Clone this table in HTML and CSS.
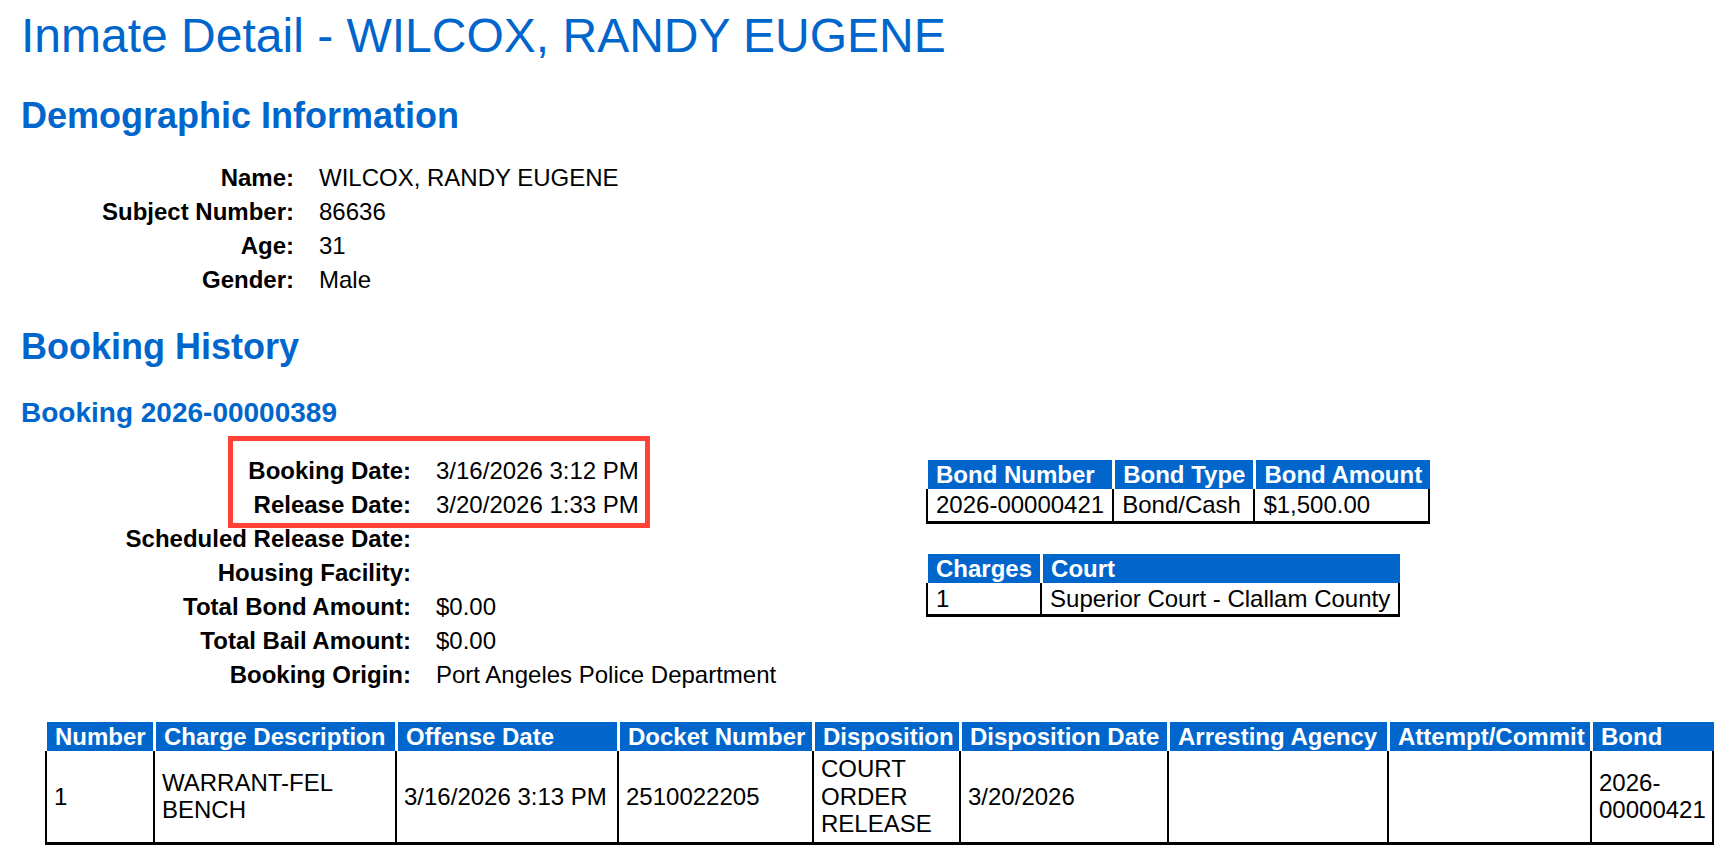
FILE: index.html
```html
<!DOCTYPE html>
<html lang="en">
<head>
<meta charset="utf-8">
<title>Inmate Detail - WILCOX, RANDY EUGENE</title>
<link rel="stylesheet" href="styles.css">
</head>
<body>
<main class="page">
  <h1 class="title">Inmate Detail - WILCOX, RANDY EUGENE</h1>

  <h2 class="section">Demographic Information</h2>
  <dl class="details demo">
    <dt>Name:</dt><dd>WILCOX, RANDY EUGENE</dd>
    <dt>Subject Number:</dt><dd>86636</dd>
    <dt>Age:</dt><dd>31</dd>
    <dt>Gender:</dt><dd>Male</dd>
  </dl>

  <h2 class="section section-booking">Booking History</h2>
  <h3 class="booking-title">Booking 2026-00000389</h3>

  <div class="booking-body">
    <div class="booking-info">
      <div class="highlight"></div>
      <dl class="details booking">
        <dt>Booking Date:</dt><dd>3/16/2026 3:12 PM</dd>
        <dt>Release Date:</dt><dd>3/20/2026 1:33 PM</dd>
        <dt>Scheduled Release Date:</dt><dd></dd>
        <dt>Housing Facility:</dt><dd></dd>
        <dt>Total Bond Amount:</dt><dd>$0.00</dd>
        <dt>Total Bail Amount:</dt><dd>$0.00</dd>
        <dt>Booking Origin:</dt><dd>Port Angeles Police Department</dd>
      </dl>
    </div>
    <div class="side-tables">
      <table class="grid side bond-table">
        <thead>
          <tr><th>Bond Number</th><th>Bond Type</th><th>Bond Amount</th></tr>
        </thead>
        <tbody>
          <tr><td>2026-00000421</td><td>Bond/Cash</td><td>$1,500.00</td></tr>
        </tbody>
      </table>
      <table class="grid side court-table">
        <thead>
          <tr><th>Charges</th><th>Court</th></tr>
        </thead>
        <tbody>
          <tr><td>1</td><td>Superior Court - Clallam County</td></tr>
        </tbody>
      </table>
    </div>
  </div>

  <table class="grid charge-table">
    <thead>
      <tr>
        <th class="c-num">Number</th>
        <th class="c-desc">Charge Description</th>
        <th class="c-off">Offense Date</th>
        <th class="c-docket">Docket Number</th>
        <th class="c-disp">Disposition</th>
        <th class="c-dispdate">Disposition Date</th>
        <th class="c-agency">Arresting Agency</th>
        <th class="c-attempt">Attempt/Commit</th>
        <th class="c-bond">Bond</th>
      </tr>
    </thead>
    <tbody>
      <tr>
        <td>1</td>
        <td>WARRANT-FEL BENCH</td>
        <td>3/16/2026 3:13 PM</td>
        <td>2510022205</td>
        <td>COURT ORDER RELEASE</td>
        <td>3/20/2026</td>
        <td></td>
        <td></td>
        <td>2026-00000421</td>
      </tr>
    </tbody>
  </table>
</main>
</body>
</html>
```

FILE: styles.css
```css
html, body {
  margin: 0;
  padding: 0;
  background: #ffffff;
}

body {
  font-family: "Liberation Sans", Arial, Helvetica, sans-serif;
  font-size: 24px;
  color: #000000;
}

.page {
  padding: 8px 22px 0 21px;
}

.title {
  margin: 0;
  font-size: 48px;
  font-weight: normal;
  line-height: 55px;
  color: #0066cc;
}

.section {
  margin: 32px 0 0;
  font-size: 36px;
  font-weight: bold;
  line-height: 41px;
  color: #0066cc;
}

.section-booking {
  margin-top: 29px;
}

.booking-title {
  margin: 30px 0 0;
  font-size: 28px;
  font-weight: bold;
  line-height: 32px;
  color: #0066cc;
}

.details {
  display: grid;
  column-gap: 25px;
  margin: 0;
  line-height: 34px;
}

.details dt {
  font-weight: bold;
  text-align: right;
  white-space: nowrap;
}

.details dd {
  margin: 0;
  white-space: nowrap;
  min-height: 34px;
}

.demo {
  grid-template-columns: 273px auto;
  margin-top: 25px;
}

.booking {
  grid-template-columns: 390px auto;
}

.booking-body {
  display: flex;
  align-items: flex-start;
  margin-top: 25px;
}

.booking-info {
  position: relative;
  width: 905px;
  flex: none;
}

.highlight {
  position: absolute;
  left: 207px;
  top: -18px;
  width: 422px;
  height: 92px;
  box-sizing: border-box;
  border: 5px solid #ff4136;
  pointer-events: none;
}

.side-tables {
  display: flex;
  flex-direction: column;
  align-items: flex-start;
  gap: 30px;
  margin-top: 6px;
}

.grid {
  border-collapse: separate;
  border-spacing: 0;
  font-size: 24px;
}

.grid th {
  background: #0066cc;
  color: #ffffff;
  font-weight: bold;
  text-align: left;
  white-space: nowrap;
  line-height: 27px;
  padding: 1px 7px;
  border-left: 3px solid #ffffff;
}

.grid th:first-child {
  border-left-width: 2px;
}

.grid td {
  line-height: 27.6px;
  padding: 2px 7px;
  border-left: 2px solid #000000;
  border-bottom: 3px solid #000000;
  vertical-align: middle;
  white-space: nowrap;
}

.grid td:last-child {
  border-right: 2px solid #000000;
}

.side th,
.side td {
  padding-left: 8px;
  padding-right: 8px;
}

.charge-table {
  margin: 30px 0 0 24px;
  table-layout: fixed;
  width: 1669px;
}

.charge-table th,
.charge-table td {
  box-sizing: border-box;
}

.charge-table th {
  padding-left: 8px;
}

.charge-table td {
  white-space: normal;
  padding: 4px 7px 4px 7px;
}

.c-num { width: 108px; }
.c-desc { width: 242px; }
.c-off { width: 222px; }
.c-docket { width: 195px; }
.c-disp { width: 147px; }
.c-dispdate { width: 208px; }
.c-agency { width: 220px; }
.c-attempt { width: 203px; }
.c-bond { width: 124px; }
```
